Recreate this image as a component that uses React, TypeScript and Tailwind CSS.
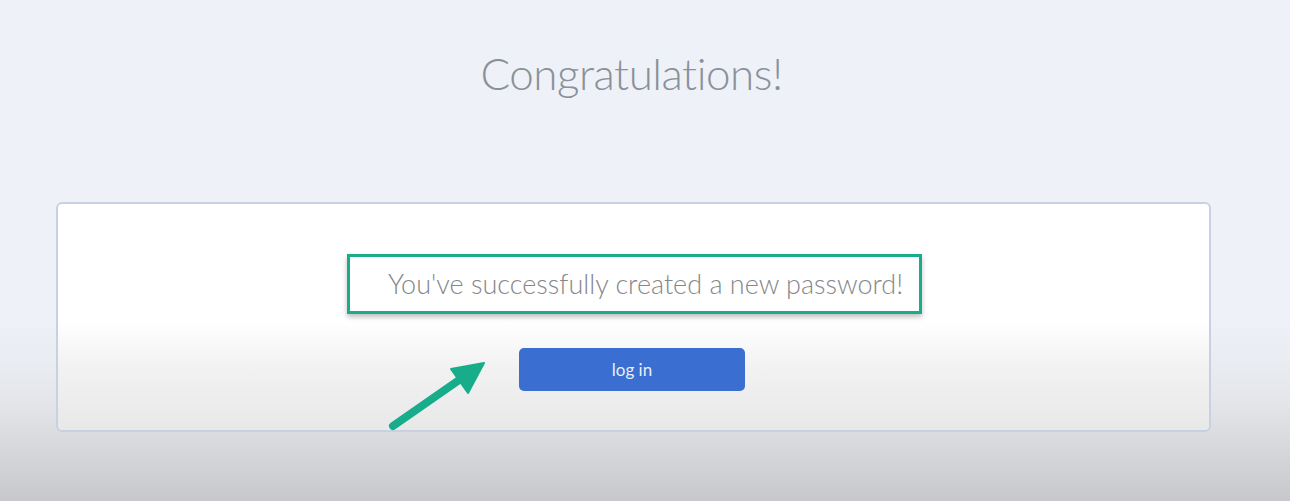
export default function App() {
  return (
    <div className="relative h-[501px] w-[1290px] overflow-hidden bg-[linear-gradient(180deg,#eef2f8_0%,#eef2f8_64%,#e4e6ea_80%,#c6c8cc_100%)] font-['Lato','Liberation_Sans',sans-serif]">
      <h1 className="pr-[27px] pt-[43px] text-center text-[44px] leading-[60px] font-light tracking-[-0.5px] text-[#8b9099]">
        Congratulations!
      </h1>

      <div className="ml-[56px] mt-[99px] flex h-[230px] w-[1155px] flex-col items-center rounded-md border-2 border-[#c8d1e2] bg-[linear-gradient(180deg,#ffffff_0%,#ffffff_52%,#f2f2f3_72%,#e8e8e9_100%)] pt-[50px]">
        <div className="ml-[2px] flex h-[60px] w-[575px] items-center justify-center border-[3px] border-[#17ad8a] pl-[22px] shadow-[0_3px_5px_rgba(0,0,0,0.25)]">
          <span className="text-[27px] font-light text-[#86878a]">You've successfully created a new password!</span>
        </div>
        <button className="mr-[3px] mt-[34px] h-[43px] w-[226px] rounded-[5px] bg-[#3a6ed0] text-[17px] text-[#e8eefa]">
          log in
        </button>
      </div>

      {/* arrow overlay */}
      <svg className="absolute left-0 top-0" width="1290" height="501">
        <line x1="393" y1="426" x2="462" y2="378" stroke="#17ad8a" strokeWidth="8" strokeLinecap="round" />
        <polygon points="484,363 451,369 468,393" fill="#17ad8a" stroke="#17ad8a" strokeWidth="2" strokeLinejoin="round" />
      </svg>
    </div>
  );
}
